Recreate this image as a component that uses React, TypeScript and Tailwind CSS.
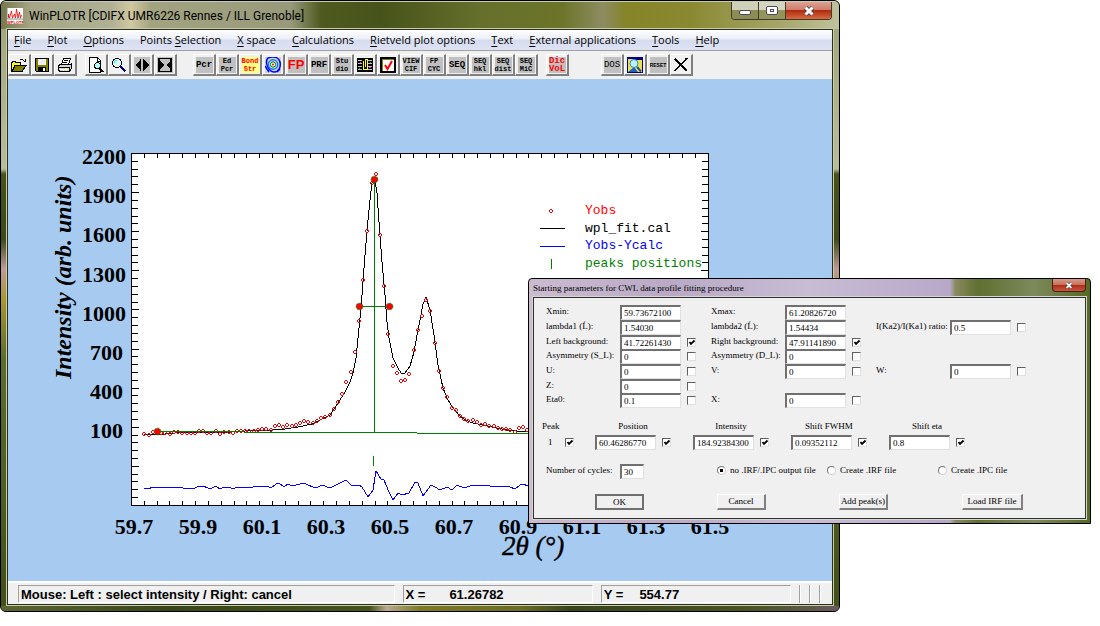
import type { ReactNode } from 'react';

const menuItems: [string, string, string][] = [
  ['', 'F', 'ile'],
  ['', 'P', 'lot'],
  ['', 'O', 'ptions'],
  ['Points ', 'S', 'election'],
  ['', 'X', ' space'],
  ['', 'C', 'alculations'],
  ['', 'R', 'ietveld plot options'],
  ['', 'T', 'ext'],
  ['', 'E', 'xternal applications'],
  ['', 'T', 'ools'],
  ['', 'H', 'elp'],
];

const observed: [number, number][] = [
  [144, 434], [149, 435], [153, 432], [161, 433], [165, 433], [170, 434], [174, 432], [178, 432],
  [182, 433], [187, 433], [191, 433], [195, 433], [199, 431], [203, 431], [207, 433], [211, 433],
  [216, 431], [220, 434], [224, 432], [229, 432], [233, 433], [237, 431], [241, 431], [245, 431],
  [249, 431], [254, 431], [258, 430], [262, 429], [266, 429], [271, 430], [275, 426], [279, 425],
  [283, 427], [287, 425], [292, 426], [296, 425], [300, 423], [304, 421], [308, 422], [313, 423],
  [317, 421], [321, 418], [325, 417], [330, 415], [334, 409], [338, 402], [342, 394], [346, 382],
  [351, 372], [355, 352], [359, 321], [363, 280], [367, 231], [372, 183], [376, 174], [380, 235],
  [384, 286], [388, 334], [393, 366], [397, 373], [401, 381], [405, 380], [409, 374], [414, 350],
  [418, 330], [422, 316], [426, 300], [430, 311], [435, 343], [439, 371], [443, 388], [447, 397],
  [452, 408], [456, 410], [460, 416], [464, 419], [468, 421], [473, 420], [477, 422], [481, 425],
  [485, 424], [489, 426], [494, 426], [498, 428], [502, 429], [506, 429], [510, 430], [515, 432],
  [519, 428], [523, 427], [527, 430],
];

const calculated =
  '144,434 165,434 175,433 195,432 232,432 258,430 272,430 285,429 298,427 312,424 320,420 330,415 338,403 345,392 350,382 353,373 356,358 360,318 362,295 365,255 368,220 370,200 372,183 373,178 375,180 377,193 379,222 382,262 385,295 387,322 389,338 393,358 398,368 401,373 405,373 410,366 414,352 417,335 420,320 423,304 426,297 430,310 434,335 438,365 443,388 448,400 453,408 460,416 465,420 473,423 487,426 497,428 507,430 517,431 530,432 708,433';

const difference =
  '144,488 148,489 153,487 162,488 165,487 170,488 173,487 182,487 183,488 195,488 199,486 203,486 208,488 212,488 216,486 220,489 224,487 229,487 233,489 237,487 253,487 258,486 267,486 271,488 276,484 279,483 284,487 288,484 292,486 304,483 308,485 313,487 318,487 322,485 330,488 338,484 346,480 351,485 359,485 362,487 368,497 373,490 376,471 381,479 384,480 389,492 393,500 398,493 402,495 409,493 415,482 418,483 423,496 431,485 435,487 440,490 447,487 452,490 457,485 464,488 473,485 482,486 485,485 490,486 502,486 510,487 515,489 520,485 523,484 528,486 560,487 708,487';

const handles: [number, number][] = [[157, 431], [359, 306], [389, 306], [374, 179]];
const yLabels = ['2200', '1900', '1600', '1300', '1000', '700', '400', '100'];
const xLabels = ['59.7', '59.9', '60.1', '60.3', '60.5', '60.7', '60.9', '61.1', '61.3', '61.5'];
const ticks = Array.from({ length: 44 }, (_, i) => i + 1);

// 4x4 ring with its corners left open
function ring(x: number, y: number) {
  return `M${x - 1} ${y - 1.5}h2M${x - 1} ${y + 1.5}h2M${x - 1.5} ${y - 1}v2M${x + 1.5} ${y - 1}v2`;
}

function Chart() {
  return (
    <svg
      viewBox="8 79 824 502"
      className="block h-auto w-full bg-[#a6caf0]"
      fontFamily="'Liberation Serif', serif"
      role="img"
      aria-label="Intensity against 2θ"
    >
      <rect x="131.5" y="153.5" width="577" height="352" fill="#fff" stroke="#000" />
      <g stroke="#000" shapeRendering="crispEdges">
        {ticks.map((i) => {
          const x = Math.round(131 + i * 12.82) + 0.5;
          const y = Math.round(153 + i * 7.82) + 0.5;
          const len = i % 5 === 0 ? 7 : 6;
          return (
            <g key={i}>
              <path d={`M${x} 154v4M${x} 505v-4`} />
              <path d={`M132 ${y}h${len}M708 ${y}h${-len}`} />
            </g>
          );
        })}
      </g>

      <g fontSize="22" fontWeight="bold">
        {yLabels.map((t, i) => (
          <text key={t} x={t.length === 4 ? 126 : 123} y={164 + i * 39.2} textAnchor="end">
            {t}
          </text>
        ))}
        {xLabels.map((t, i) => (
          <text key={t} x={134 + i * 64} y="534" textAnchor="middle">
            {t}
          </text>
        ))}
      </g>
      <text transform="translate(71 379) rotate(-90)" fontSize="24" fontWeight="bold" fontStyle="italic">
        Intensity (arb. units)
      </text>
      <text x="502" y="555" fontSize="27" fontStyle="italic" stroke="#000" strokeWidth="0.4">
        2θ (°)
      </text>

      <g fill="none" shapeRendering="crispEdges">
        <polyline points={calculated} stroke="#000" />
        {observed.map(([x, y]) => (
          <path key={x} d={ring(x, y)} stroke="#f00000" />
        ))}
        <polyline points={difference} stroke="#00f" />
        <path d="M157 431.5H244M244 432.5H417M417 433.5H708M359 306.5h30M374.5 179v253M373.5 456v10" stroke="#008000" />
      </g>
      {handles.map(([x, y]) => (
        <circle key={x} cx={x + 0.5} cy={y + 0.5} r="3.3" fill="#f00" stroke="#008000" strokeDasharray="2 1" />
      ))}

      <g shapeRendering="crispEdges" fill="none">
        <path d={ring(551, 211)} stroke="#f00" />
        <path d="M540 228.5h25" stroke="#000" />
        <path d="M540 246.5h25" stroke="#00f" />
        <path d="M551.5 259v10" stroke="#008000" />
      </g>
      <g fontFamily="'Liberation Mono', monospace" fontSize="13">
        <text x="585" y="214" fill="#f00">Yobs</text>
        <text x="585" y="232">wpl_fit.cal</text>
        <text x="585" y="249" fill="#00f">Yobs-Ycalc</text>
        <text x="585" y="267" fill="#008000">peaks positions</text>
      </g>
    </svg>
  );
}

function Pixel({ children }: { children: ReactNode }) {
  return (
    <svg viewBox="0 0 16 16" className="size-4" shapeRendering="crispEdges" fill="none" stroke="#000">
      {children}
    </svg>
  );
}

function ToolButton({ label, children }: { label: string; children: ReactNode }) {
  return (
    <button
      type="button"
      aria-label={label}
      className="flex h-[22px] w-[23px] items-center justify-center border-t border-r-2 border-b-2 border-l border-t-white border-r-[#808080] border-b-[#808080] border-l-white bg-[#f0f0f0]"
    >
      {children}
    </button>
  );
}

function TextIcon({ lines, className }: { lines: string[]; className: string }) {
  return (
    <span className={`flex h-4 w-[17px] flex-col items-center justify-center whitespace-nowrap ${className}`}>
      {lines.map((l) => (
        <span key={l}>{l}</span>
      ))}
    </span>
  );
}

const small = "bg-[#c0c0c0] font-['Liberation_Mono',monospace] text-[7px] leading-[8px] font-bold";
const large = "bg-[#c0c0c0] font-['Liberation_Mono',monospace] text-[9px] leading-[16px] font-bold";

function Toolbar() {
  return (
    <div className="flex h-[28px] items-start overflow-hidden bg-[#f0f0f0] pt-[3px]">
      <div className="flex">
        <ToolButton label="Open">
          <Pixel>
            <path d="M0.5 14.5v-9h1v-1h3v1h5v3" fill="#ff0" />
            <path d="M1 14.5l3-6h11l-4 6z" fill="#808000" />
            <path d="M9 2.5h3M12 3.5h1M13 4.5h2M14.5 2v3" />
          </Pixel>
        </ToolButton>
        <ToolButton label="Save">
          <Pixel>
            <path d="M1.5 1.5h13v13h-12l-1-1z" fill="#808000" />
            <path d="M4 2h8v6H4z" fill="#f0f0f0" stroke="none" />
            <path d="M4 10h8v5H4z" fill="#000" stroke="none" />
            <path d="M9 11h2v3H9z" fill="#fff" stroke="none" />
          </Pixel>
        </ToolButton>
        <ToolButton label="Print">
          <Pixel>
            <path d="M4.5 7.5l2-6h7l-2 6z" fill="#fff" />
            <path d="M7 3.5h4M6 5.5h4" />
            <path d="M1.5 8.5l2-1h10l1-1v5l-2 3h-10l-1-2z" fill="#d8d8d8" />
            <path d="M1 10.5h12M12.5 10v4" />
            <path d="M3 12.5h8" stroke="#fff" />
            <path d="M8 11.5h2" stroke="#ff0" />
          </Pixel>
        </ToolButton>
      </div>
      <div className="ml-2 flex">
        <ToolButton label="Print preview">
          <Pixel>
            <path d="M1.5 0.5h8l3 3v12h-11z" fill="#fff" />
            <path d="M9.5 1v3h3" />
            <circle cx="9.5" cy="8.5" r="3" fill="#aff" />
            <path d="M11.5 11l3.5 4" strokeWidth="2" />
          </Pixel>
        </ToolButton>
        <ToolButton label="Zoom">
          <Pixel>
            <circle cx="6" cy="6" r="4.5" fill="#dff" />
            <path d="M4 3.5h2M3.5 4v2" stroke="#0ff" />
            <path d="M9.5 9.5l5 5" stroke="#000080" strokeWidth="2.5" />
          </Pixel>
        </ToolButton>
        <ToolButton label="Expand">
          <Pixel>
            <path d="M0 0h16v16H0z" fill="#c0c0c0" stroke="none" />
            <path d="M6.5 2v12M9.5 2v12" />
            <path d="M6 3v10L1 8zM10 3v10l5-5z" fill="#000" stroke="none" />
          </Pixel>
        </ToolButton>
        <ToolButton label="Shrink">
          <Pixel>
            <path d="M0 0h16v16H0z" fill="#c0c0c0" stroke="none" />
            <path d="M2 1v14M14 1v14" strokeWidth="2" />
            <path d="M1 1.5h14M1 14.5h14" />
            <path d="M3 4v8l4-4zM13 4v8L9 8z" fill="#000" stroke="none" />
          </Pixel>
        </ToolButton>
      </div>
      <div className="ml-4 flex">
        <ToolButton label="Pcr">
          <TextIcon lines={['Pcr']} className={large} />
        </ToolButton>
        <ToolButton label="Edit Pcr">
          <TextIcon lines={['Ed', 'Pcr']} className={small} />
        </ToolButton>
        <ToolButton label="Bond Str">
          <TextIcon
            lines={['Bond', 'Str']}
            className="bg-[#ffff80] font-['Liberation_Mono',monospace] text-[7px] leading-[8px] font-bold text-[#f00]"
          />
        </ToolButton>
        <ToolButton label="Fourier map">
          <svg viewBox="0 0 16 16" className="size-4" fill="none">
            <path d="M0 0h16v16H0z" fill="#d0d4c8" />
            <path d="M3 1C8-1 14 0 15 5s-1 10-6 10S-1 5 3 1z" stroke="#00f" strokeWidth="1.5" />
            <circle cx="8" cy="7.5" r="4.7" stroke="#0080ff" strokeWidth="1.5" />
            <circle cx="8" cy="7.5" r="2.6" fill="#fff" stroke="#008000" />
            <circle cx="8" cy="7.5" r="1" fill="#f00" />
            <path d="M0 9l4 6M12 15l3-3" stroke="#00f" strokeWidth="1.5" />
          </svg>
        </ToolButton>
        <ToolButton label="FullProf">
          <TextIcon
            lines={['FP']}
            className="bg-[#c0c0c0] font-['Liberation_Sans',sans-serif] text-[13px] leading-[16px] font-bold text-[#f00]"
          />
        </ToolButton>
        <ToolButton label="Prf">
          <TextIcon lines={['PRF']} className={large} />
        </ToolButton>
        <ToolButton label="Studio">
          <TextIcon lines={['Stu', 'dio']} className={small} />
        </ToolButton>
        <ToolButton label="Crystal structure">
          <Pixel>
            <path d="M0 1h16v14H0z" fill="#000" stroke="none" />
            <path d="M1 3.5h4M1 6.5h4M1 9.5h4M1 12.5h4M11 3.5h4M11 6.5h4M11 9.5h4M11 12.5h4" stroke="#c0c0c0" />
            <path d="M6.5 4v8h4V2h-2v8" stroke="#ff0" />
            <path d="M3 5h1M12 10h2" stroke="#f0f" />
            <path d="M2 11h1M13 5h1" stroke="#0c0" />
          </Pixel>
        </ToolButton>
        <ToolButton label="Check">
          <Pixel>
            <path d="M1 1h14v14H1z" fill="#fff" strokeWidth="2" />
            <path d="M2.5 2v12M2 2.5h12" stroke="#808000" />
            <path d="M5 8l2.5 4L12 4" stroke="#f00" strokeWidth="2" shapeRendering="auto" />
          </Pixel>
        </ToolButton>
        <ToolButton label="View CIF">
          <TextIcon lines={['VIEW', 'CIF']} className={small} />
        </ToolButton>
        <ToolButton label="FP cyc">
          <TextIcon lines={['FP', 'CYC']} className={small} />
        </ToolButton>
        <ToolButton label="Seq">
          <TextIcon lines={['SEQ']} className={large} />
        </ToolButton>
        <ToolButton label="Seq hkl">
          <TextIcon lines={['SEQ', 'hkl']} className={small} />
        </ToolButton>
        <ToolButton label="Seq dist">
          <TextIcon lines={['SEQ', 'dist']} className={small} />
        </ToolButton>
        <ToolButton label="Seq mic">
          <TextIcon lines={['SEQ', 'MiC']} className={small} />
        </ToolButton>
      </div>
      <div className="ml-2 flex">
        <ToolButton label="Dicvol">
          <TextIcon
            lines={['Dic', 'VoL']}
            className="bg-[#c0c0c0] font-['Liberation_Mono',monospace] text-[9px] leading-[8px] font-bold text-[#f00]"
          />
        </ToolButton>
      </div>
      <div className="ml-8 flex">
        <ToolButton label="DOS">
          <TextIcon
            lines={['DOS']}
            className="bg-[#c0c0c0] font-['Liberation_Mono',monospace] text-[9px] leading-[16px]"
          />
        </ToolButton>
        <ToolButton label="Explorer">
          <svg viewBox="0 0 16 16" className="size-4" fill="none">
            <path d="M0 0h16v16H0z" fill="#000080" />
            <path d="M1 2h5l1 1h8v12H1z" fill="#f0e050" />
            <path d="M1 15l6-5 4 5z" fill="#2060c0" />
            <circle cx="7" cy="6.5" r="4" fill="#c0f0ff" stroke="#2090c0" />
            <path d="M10 10l4 4.5" stroke="#2050a0" strokeWidth="2" />
          </svg>
        </ToolButton>
        <ToolButton label="Reset">
          <TextIcon
            lines={['RESET']}
            className="bg-[#c0c0c0] font-['Liberation_Sans',sans-serif] text-[5px] leading-[16px] font-bold"
          />
        </ToolButton>
        <ToolButton label="Exit">
          <Pixel>
            <path d="M2 2l12 12" strokeWidth="2" />
            <path d="M14 1L2 14" strokeWidth="1.5" />
          </Pixel>
        </ToolButton>
      </div>
    </div>
  );
}

function CloseGlyph({ className }: { className: string }) {
  return (
    <svg viewBox="0 0 12 10" className={className} fill="none">
      <path d="M2.5 1.5l7 7M9.5 1.5l-7 7" stroke="#4a3a44" strokeWidth="4.5" />
      <path d="M2.5 1.5l7 7M9.5 1.5l-7 7" stroke="#fff" strokeWidth="3" />
    </svg>
  );
}

const panel =
  'h-[18px] border border-t-[#a0a0a0] border-r-white border-b-white border-l-[#a0a0a0] pl-0.5 leading-[17px] whitespace-nowrap';

function MainWindow() {
  return (
    <section className="mr-[260px] overflow-hidden rounded-md border border-black bg-[#4c5820] font-['Open_Sans',sans-serif] text-[11px] text-black">
      <header className="flex h-[28px] justify-between border-t border-[#c8ccb0] bg-[linear-gradient(90deg,#77784a_0,#a5a586_30px,#b0b094_110px,#d0c8a0_130px,#a2a480_150px,#97997a_290px,#4f5a20_320px,#46531a_380px,#66702c_480px,#6b7428_560px,#8d8c62_602px,#858428_625px,#8a8932_690px,#a6a66c_780px,#c0c29c_838px)] pl-[6px]">
        <div className="flex items-center gap-1.5">
          <svg viewBox="0 0 16 16" className="size-4">
            <path d="M0 0h16v16H0z" fill="#fff" />
            <path d="M1.5 10V6l1 4 2-7 1 7 2-4 1 4 1-9 1.500 9 1.500-6 1 6 1-3" fill="none" stroke="#e00000" strokeWidth=".8" />
            <path d="M0 0v11h16" fill="none" stroke="#888" />
            <text x="0" y="16" fontSize="4" fontWeight="bold" fill="#e00000" fontFamily="'Liberation Sans', sans-serif">
              WPLOTR
            </text>
          </svg>
          <h1 className="font-[Roboto,sans-serif] text-[12px]">WinPLOTR [CDIFX UMR6226 Rennes / ILL Grenoble]</h1>
        </div>
        <div className="mr-[7px] flex h-[18px] overflow-hidden rounded-b border border-t-0 border-[#3c3c28]">
          <button type="button" aria-label="Minimize" className="flex w-[27px] items-end justify-center border-r border-[#3c3c28] bg-linear-to-b from-[#d0d0b8] from-50% to-[#8c8c54] to-50% pb-1">
            <span className="h-[5px] w-3 rounded-xs border border-[#4a4a5a] bg-white" />
          </button>
          <button type="button" aria-label="Maximize" className="flex w-[27px] items-center justify-center border-r border-[#3c3c28] bg-linear-to-b from-[#d4d4c0] from-50% to-[#94945c] to-50%">
            <span className="flex h-[9px] w-3 items-center justify-center rounded-xs border border-[#4a4a5a] bg-white">
              <span className="h-[3px] w-1 border border-[#4a4a5a]" />
            </span>
          </button>
          <button type="button" aria-label="Close" className="flex w-[45px] items-center justify-center bg-[linear-gradient(#dba294,#cf7a64_50%,#b02c10_50%,#d86a40)]">
            <CloseGlyph className="h-[10px] w-3" />
          </button>
        </div>
      </header>

      <div className="bg-[linear-gradient(#a3a87c_0,#b8bc9c_140px,#48531a_145px,#3c4a18_210px,#c09a98_240px,#a89830_270px,#5e6c2c_330px,#44521a_560px)] px-[6px]">
        <div className="border border-[#2c3018] shadow-[0_0_0_1px_#c8ccae]">
          <nav className="flex h-5 items-center gap-4 bg-[linear-gradient(#fff,#eceff8_45%,#d6dcee_50%,#dde3f3)] px-1.5">
            {menuItems.map(([before, key, after]) => (
              <button key={before + key + after} type="button" className="whitespace-pre">
                {before}
                <span className="underline underline-offset-2">{key}</span>
                {after}
              </button>
            ))}
          </nav>
          <div className="h-px border-b border-[#a0a0a0]" />
          <Toolbar />
          <Chart />
          <footer className="flex h-[23px] items-center border-t-2 border-white bg-[#f0f0f0] pr-[11px] pl-[10px] font-['Liberation_Sans',sans-serif] text-[13px] font-bold">
            <p className={`flex-2 ${panel}`}>Mouse: Left : select intensity / Right: cancel</p>
            <p className={`ml-2 flex flex-1 gap-6 ${panel}`}>
              <span>X =</span>
              <span>61.26782</span>
            </p>
            <p className={`ml-2 flex flex-1 gap-4 ${panel}`}>
              <span>Y =</span>
              <span>554.77</span>
            </p>
            <div className="ml-2 flex h-[18px] gap-2">
              <span className="w-0.5 border-l border-[#a0a0a0] bg-white" />
              <span className="w-0.5 border-l border-[#a0a0a0] bg-white" />
              <span className="w-0.5 border-l border-[#a0a0a0] bg-white" />
            </div>
          </footer>
        </div>
      </div>
      <div className="mt-px h-[5px] bg-[linear-gradient(90deg,#5c6630,#38461a_20%,#46541c_44%,#b8a890_46%,#7c7a24_50%,#6c6c24_62%,#38441c_68%,#4a5424_90%,#6a5a60)]" />
    </section>
  );
}

interface Field {
  label: string;
  value: string;
  // undefined: the parameter cannot be refined and has no box
  refine?: boolean;
}

function Tick({ label, checked }: { label: string; checked: boolean }) {
  return (
    <span className="relative size-[9px]">
      <input
        type="checkbox"
        aria-label={label}
        defaultChecked={checked}
        className="peer block size-[9px] appearance-none border border-t-[#606060] border-r-[#e0e0e0] border-b-[#e0e0e0] border-l-[#606060] bg-white"
      />
      <svg viewBox="0 0 9 9" className="pointer-events-none absolute inset-0 hidden size-[9px] peer-checked:block" fill="none">
        <path d="M2.5 4l1.5 2L7.5 2.5" stroke="#000" strokeWidth="1.8" />
      </svg>
    </span>
  );
}

const inputClass =
  'h-[15px] border-t-2 border-l-2 border-r border-b border-t-[#707070] border-l-[#707070] border-r-[#e0e0e0] border-b-[#e0e0e0] bg-white pl-0.5 text-[9px] leading-[12px] outline-none';

function FieldColumn({ fields }: { fields: (Field | null)[] }) {
  return (
    <div className="grid grid-rows-[15px_15px_14px_15px_15px_14px_15px]">
      {fields.map((f, i) =>
        f ? (
          <div key={f.label} className="flex items-start">
            <label htmlFor={`p-${f.label}`} className="w-[74px] leading-[12px] whitespace-nowrap">
              {f.label}
            </label>
            <input id={`p-${f.label}`} defaultValue={f.value} className={`${inputClass} mr-1.5 w-[61px]`} />
            <span className="flex h-[15px] w-[9px] items-center">
              {f.refine !== undefined && <Tick label={`Refine ${f.label}`} checked={f.refine} />}
            </span>
          </div>
        ) : (
          <div key={i} />
        ),
      )}
    </div>
  );
}

const leftFields: Field[] = [
  { label: 'Xmin:', value: '59.73672100' },
  { label: 'lambda1 (Ĺ):', value: '1.54030' },
  { label: 'Left background:', value: '41.72261430', refine: true },
  { label: 'Asymmetry (S_L):', value: '0', refine: false },
  { label: 'U:', value: '0', refine: false },
  { label: 'Z:', value: '0', refine: false },
  { label: 'Eta0:', value: '0.1', refine: false },
];

const middleFields: (Field | null)[] = [
  { label: 'Xmax:', value: '61.20826720' },
  { label: 'lambda2 (Ĺ):', value: '1.54434' },
  { label: 'Right background:', value: '47.91141890', refine: true },
  { label: 'Asymmetry (D_L):', value: '0', refine: false },
  { label: 'V:', value: '0', refine: false },
  null,
  { label: 'X:', value: '0', refine: false },
];

const rightFields: (Field | null)[] = [
  null,
  { label: 'I(Ka2)/I(Ka1) ratio:', value: '0.5', refine: false },
  null,
  null,
  { label: 'W:', value: '0', refine: false },
  null,
  null,
];

const peak = [
  { label: 'Position', value: '60.46286770' },
  { label: 'Intensity', value: '184.92384300' },
  { label: 'Shift FWHM', value: '0.09352112' },
  { label: 'Shift eta', value: '0.8' },
];

const outputs = ['no .IRF/.IPC output file', 'Create .IRF file', 'Create .IPC file'];
const outputWidths = ['w-[110px]', 'w-[111px]', 'w-[90px]'];

function DialogButton({ children, primary }: { children: string; primary?: boolean }) {
  return (
    <button
      type="button"
      className={
        primary
          ? 'h-4 w-[49px] border-2 border-[#707070] bg-[#f0f0f0] leading-none'
          : 'h-4 min-w-[49px] border-t border-r-2 border-b-2 border-l border-t-white border-r-[#808080] border-b-[#808080] border-l-white bg-[#f0f0f0] leading-none whitespace-nowrap'
      }
    >
      {children}
    </button>
  );
}

function ParametersDialog() {
  return (
    <section
      role="dialog"
      aria-labelledby="dialog-title"
      className="absolute top-[278px] right-[9px] left-[48%] rounded-t border border-black bg-[linear-gradient(90deg,#cbbcd0_0,#b9a9c6_25%,#c8bcd4_50%,#b8a8c8_75%,#8a8a60_76%,#5f7030_80%,#7d8a5c_90%,#566a20)] px-[4px] pb-[4px] font-['Liberation_Serif',serif] text-[9px] text-black"
    >
      <header className="flex h-[18px] items-start justify-between">
        <h2 id="dialog-title" className="leading-[18px]">
          Starting parameters for CWL data profile fitting procedure
        </h2>
        <button
          type="button"
          aria-label="Close dialog"
          className="flex h-[13px] w-[34px] items-center justify-center rounded-b border border-t-0 border-[#4a1c14] bg-[linear-gradient(#d89a8c,#c86c58_50%,#a82c14_50%,#c8583c)]"
        >
          <CloseGlyph className="h-[7px] w-2" />
        </button>
      </header>

      <form className="border border-[#30342c] bg-[#f0f0f0] pt-[7px] pb-2 pl-2 shadow-[0_0_0_1px_#d8d4d8]" onSubmit={(e) => e.preventDefault()}>
        <div className="flex gap-[15px] pl-1">
          <FieldColumn fields={leftFields} />
          <FieldColumn fields={middleFields} />
          <FieldColumn fields={rightFields} />
        </div>

        <div className="mt-3 flex">
          <div className="w-[53px]">
            <p className="pb-0.5 leading-[13px]">Peak</p>
            <p className="flex items-center gap-3 pl-1.5 leading-[15px]">
              1 <Tick label="Use peak 1" checked />
            </p>
          </div>
          {peak.map((p) => (
            <div key={p.label} className="w-[98px]">
              <label htmlFor={`peak-${p.label}`} className="block w-[76px] pb-0.5 text-center leading-[13px]">
                {p.label}
              </label>
              <div className="flex items-center gap-1.5">
                <input id={`peak-${p.label}`} defaultValue={p.value} className={`${inputClass} w-[61px]`} />
                <Tick label={`Refine ${p.label}`} checked />
              </div>
            </div>
          ))}
        </div>

        <div className="mt-[14px] flex items-start pl-1">
          <label htmlFor="cycles" className="w-[74px] leading-[12px]">
            Number of cycles:
          </label>
          <input id="cycles" defaultValue="30" className={`${inputClass} mr-[73px] w-6`} />
          {outputs.map((o, i) => (
            <label key={o} className={`flex items-center gap-1 leading-[12px] whitespace-nowrap ${outputWidths[i]}`}>
              <input
                type="radio"
                name="output"
                defaultChecked={i === 0}
                className="size-[9px] appearance-none rounded-full border border-t-[#707070] border-r-[#d0d0d0] border-b-[#d0d0d0] border-l-[#707070] bg-white checked:bg-[radial-gradient(#000_0_1.5px,#fff_2px)]"
              />
              {o}
            </label>
          ))}
        </div>

        <div className="mt-[15px] flex pl-[53px]">
          <div className="w-[122px]">
            <DialogButton primary>OK</DialogButton>
          </div>
          <div className="w-[122px]">
            <DialogButton>Cancel</DialogButton>
          </div>
          <div className="w-[123px]">
            <DialogButton>Add peak(s)</DialogButton>
          </div>
          <div className="grid w-[61px]">
            <DialogButton>Load IRF file</DialogButton>
          </div>
        </div>
      </form>
    </section>
  );
}

export default function App() {
  return (
    <main className="relative min-h-screen bg-white">
      <MainWindow />
      <ParametersDialog />
    </main>
  );
}
